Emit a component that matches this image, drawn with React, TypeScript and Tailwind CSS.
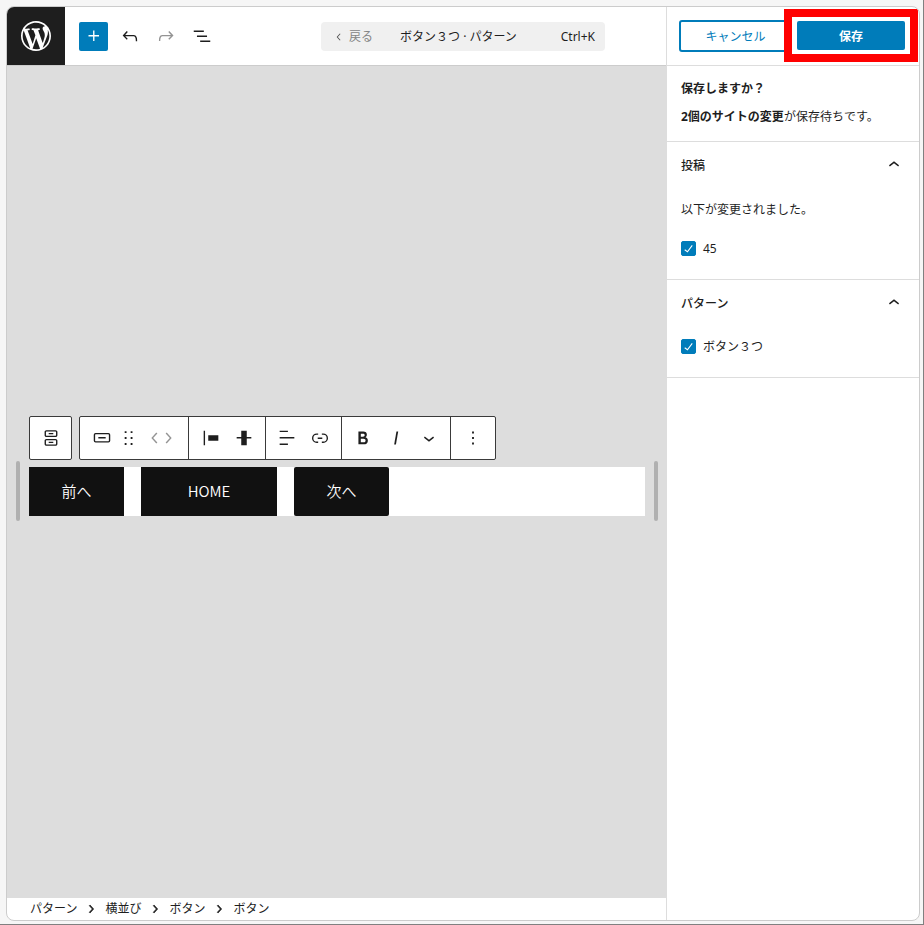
import { ReactNode, useState } from "react";

const paths = {
    plus: "M11 12.5V17.5H12.5V12.5H17.5V11H12.5V6H11V11H6V12.5H11Z",
    undo: "M18.3 11.7c-.6-.6-1.4-.9-2.3-.9H6.7l2.9-3.3-1.1-1-4.5 5L8.5 16l1-1-2.7-2.7H16c.5 0 .9.2 1.3.5 1 1 1 3.4 1 4.5v.3h1.5v-.2c0-1.5 0-4.3-1.5-5.7z",
    redo: "M15.6 6.5l-1.1 1 2.9 3.3H8c-.9 0-1.7.3-2.3.9-1.4 1.5-1.4 4.2-1.4 5.6v.2h1.5v-.3c0-1.1 0-3.5 1-4.5.3-.3.7-.5 1.3-.5h9.2L14.5 15l1.1 1.1 4.6-4.6-4.6-5z",
    listView: "M3 6h11v1.5H3V6Zm3.5 5.5h11V13h-11v-1.5ZM21 17H10v1.5h11V17Z",
    chevronUp: "M6.5 12.4L12 8l5.5 4.4-.9 1.2L12 10l-4.5 3.6-1-1.2z",
    chevronDown: "M17.5 11.6L12 16l-5.5-4.4.9-1.2L12 14l4.5-3.6 1 1.2z",
    chevronLeft: "M14.6 7l-1.2-1L8 12l5.4 6 1.2-1-4.6-5z",
    chevronRight: "M10.6 6L9.4 7l4.6 5-4.6 5 1.2 1 5.4-6z",
    check: "M16.7 7.1l-6.3 8.5-3.3-2.5-.9 1.2 4.5 3.4L17.9 8z",
    buttons:
        "M14.5 17.5H9.5V16H14.5V17.5Z M14.5 8H9.5V6.5H14.5V8Z M7 3.5H17C18.1 3.5 19 4.4 19 5.5V9C19 10.1 18.1 11 17 11H7C5.9 11 5 10.1 5 9V5.5C5 4.4 5.9 3.5 7 3.5ZM17 5H7C6.7 5 6.5 5.2 6.5 5.5V9C6.5 9.3 6.7 9.5 7 9.5H17C17.3 9.5 17.5 9.3 17.5 9V5.5C17.5 5.2 17.3 5 17 5Z M7 13H17C18.1 13 19 13.9 19 15V18.5C19 19.6 18.1 20.5 17 20.5H7C5.9 20.5 5 19.6 5 18.5V15C5 13.9 5.9 13 7 13ZM17 14.5H7C6.7 14.5 6.5 14.7 6.5 15V18.5C6.5 18.8 6.7 19 7 19H17C17.3 19 17.5 18.8 17.5 18.5V15C17.5 14.7 17.3 14.5 17 14.5Z",
    button: "M8 12.5h8V11H8v1.5Z M19 6.5H5a2 2 0 0 0-2 2V15a2 2 0 0 0 2 2h14a2 2 0 0 0 2-2V8.5a2 2 0 0 0-2-2ZM5 8h14a.5.5 0 0 1 .5.5V15a.5.5 0 0 1-.5.5H5a.5.5 0 0 1-.5-.5V8.5A.5.5 0 0 1 5 8Z",
    drag: "M7.3 6.5h2v-2h-2zm6.5 0h2v-2h-2zM7.3 13h2v-2h-2zm6.5 0h2v-2h-2zM7.3 19.5h2v-2h-2zm6.5 0h2v-2h-2z",
    justifyLeft: "M9 9v6h11V9H9zM4 20h1.5V4H4v16z",
    alignMiddle: "M20 11h-5V4H9v7H4v1.5h5V20h6v-7.5h5z",
    alignText: "M13 5.5H4V4h9v1.5Zm7 7H4V11h16v1.5Zm-7 7H4V18h9v1.5Z",
    link: "M10 17.389H8.444A5.194 5.194 0 1 1 8.444 7H10v1.5H8.444a3.694 3.694 0 0 0 0 7.389H10v1.5ZM14 7h1.556a5.194 5.194 0 0 1 0 10.39H14v-1.5h1.556a3.694 3.694 0 0 0 0-7.39H14V7Zm-4.5 6h5v-1.5h-5V13Z",
    bold: "M14.7 11.3c1-.6 1.5-1.6 1.5-3 0-2.3-1.3-3.4-4-3.4H7v14h5.8c1.4 0 2.5-.3 3.3-1 .8-.7 1.2-1.7 1.2-2.9.1-1.9-.8-3.1-2.6-3.7zm-5.1-4h2.3c.6 0 1.1.1 1.4.4.3.3.5.7.5 1.2s-.2 1-.5 1.2c-.3.3-.8.4-1.4.4H9.6V7.3zm4.6 9c-.4.3-1 .4-1.7.4H9.6v-3.9h2.9c.7 0 1.3.2 1.7.5.4.3.6.8.6 1.5s-.2 1.2-.6 1.5z",
    italic: "M12.5 5L10 19h1.9l2.5-14z",
    more: "M13 19h-2v-2h2v2zm0-6h-2v-2h2v2zm0-6h-2V5h2v2z",
    wordpress:
        "M20 10c0-5.51-4.49-10-10-10C4.48 0 0 4.49 0 10c0 5.52 4.48 10 10 10 5.51 0 10-4.48 10-10zM7.78 15.37L4.37 6.22c.55-.02 1.17-.08 1.17-.08.5-.06.44-1.13-.06-1.11 0 0-1.45.11-2.37.11-.18 0-.37 0-.58-.01C4.12 2.69 6.87 1.11 10 1.11c2.33 0 4.45.87 6.05 2.34-.68-.11-1.65.39-1.65 1.58 0 .74.45 1.36.9 2.1.35.61.55 1.36.55 2.46 0 1.49-1.4 5-1.4 5l-3.03-8.37c.54-.02.82-.17.82-.17.5-.05.44-1.25-.06-1.22 0 0-1.44.12-2.38.12-.87 0-2.33-.12-2.33-.12-.5-.03-.56 1.2-.06 1.22l.92.08 1.26 3.41zM17.41 10c.24-.64.74-1.87.43-4.25.7 1.29 1.05 2.71 1.05 4.25 0 3.29-1.73 6.24-4.4 7.78.97-2.59 1.94-5.2 2.92-7.78zM6.1 18.09C3.12 16.65 1.11 13.53 1.11 10c0-1.3.23-2.48.72-3.59C3.25 10.3 4.67 14.2 6.1 18.09zm4.03-6.63l2.58 6.98c-.86.29-1.76.45-2.71.45-.79 0-1.57-.11-2.29-.33.81-2.38 1.62-4.74 2.42-7.1z",
};

type IconName = keyof typeof paths;

const Icon = ({
    name,
    className = "size-[22px]",
    viewBox = "0 0 24 24",
}: {
    name: IconName;
    className?: string;
    viewBox?: string;
}) => (
    <svg
        viewBox={viewBox}
        className={`shrink-0 fill-current ${className}`}
        aria-hidden="true"
    >
        <path d={paths[name]} />
    </svg>
);

const ToolButton = ({
    icon,
    label,
    className,
}: {
    icon: IconName;
    label: string;
    className: string;
}) => (
    <button
        type="button"
        aria-label={label}
        className={`flex h-9 shrink-0 items-center justify-center ${className}`}
    >
        <Icon name={icon} />
    </button>
);

const Header = () => (
    <header className="flex h-[59px] items-center border-b border-[#ccc]">
        <a
            href="#dashboard"
            aria-label="WordPress"
            className="flex h-full w-[58px] shrink-0 items-center justify-center bg-[#1e1e1e] text-white"
        >
            <Icon
                name="wordpress"
                className="size-9"
                viewBox="-2 -2 24 24"
            />
        </a>
        <button
            type="button"
            aria-label="ブロック挿入"
            className="mr-1 ml-3.5 flex size-[29px] shrink-0 items-center justify-center rounded-[2px] bg-[#007cba] text-white"
        >
            <Icon name="plus" />
        </button>
        <ToolButton icon="undo" label="元に戻す" className="w-9" />
        <ToolButton icon="redo" label="やり直し" className="w-9 text-[#949494]" />
        <ToolButton icon="listView" label="リスト表示" className="w-9" />
        <div className="flex flex-1 justify-center pl-10">
            <div className="flex h-[29px] w-full max-w-[284px] items-center rounded bg-[#f0f0f0] pt-0.5 pr-2.5 pl-[11px]">
                <button
                    type="button"
                    className="flex items-center gap-[3px] text-[#858585]"
                >
                    <Icon
                        name="chevronLeft"
                        className="size-3.5 text-[#555]"
                    />
                    戻る
                </button>
                <button
                    type="button"
                    className="flex flex-1 items-center justify-between pl-[27px]"
                >
                    <span>ボタン３つ · パターン</span>
                    <kbd className="font-[inherit]">Ctrl+K</kbd>
                </button>
            </div>
        </div>
    </header>
);

const ToolbarGroup = ({ children }: { children: ReactNode }) => (
    <div className="flex items-center border-r border-[#3a3a3a] last:border-r-0">
        {children}
    </div>
);

const BlockToolbar = () => (
    <div
        role="toolbar"
        aria-label="ブロックツール"
        className="absolute bottom-full left-0 mb-[7px] flex gap-[7px] text-[#1e1e1e]"
    >
        <div className="flex h-11 items-center rounded-[2px] border border-[#3a3a3a] bg-white">
            <ToolButton
                icon="buttons"
                label="親ブロックを選択"
                className="w-[41px]"
            />
        </div>
        <div className="flex h-11 rounded-[2px] border border-[#3a3a3a] bg-white">
            <ToolbarGroup>
                <ToolButton
                    icon="button"
                    label="ボタン"
                    className="w-[38px] pl-1.5"
                />
                <ToolButton icon="drag" label="ドラッグ" className="w-[22px]" />
                <div className="mr-3.5 ml-2 flex text-[#949494]">
                    <ToolButton
                        icon="chevronLeft"
                        label="左に移動"
                        className="w-[13px]"
                    />
                    <ToolButton
                        icon="chevronRight"
                        label="右に移動"
                        className="w-[13px]"
                    />
                </div>
            </ToolbarGroup>
            <ToolbarGroup>
                <div className="flex px-[5px]">
                    <ToolButton
                        icon="justifyLeft"
                        label="項目の揃え位置"
                        className="w-[33px]"
                    />
                    <ToolButton
                        icon="alignMiddle"
                        label="垂直配置"
                        className="w-[33px]"
                    />
                </div>
            </ToolbarGroup>
            <ToolbarGroup>
                <div className="flex pr-[5px] pl-1">
                    <ToolButton
                        icon="alignText"
                        label="テキストの配置"
                        className="w-[33px]"
                    />
                    <ToolButton
                        icon="link"
                        label="リンク"
                        className="w-[33px]"
                    />
                </div>
            </ToolbarGroup>
            <ToolbarGroup>
                <div className="flex pr-[5px] pl-1">
                    <ToolButton
                        icon="bold"
                        label="太字"
                        className="w-[33px]"
                    />
                    <ToolButton
                        icon="italic"
                        label="イタリック"
                        className="w-[33px]"
                    />
                    <ToolButton
                        icon="chevronDown"
                        label="さらに表示"
                        className="w-[33px]"
                    />
                </div>
            </ToolbarGroup>
            <ToolbarGroup>
                <ToolButton
                    icon="more"
                    label="オプション"
                    className="w-11"
                />
            </ToolbarGroup>
        </div>
    </div>
);

const ResizeHandle = ({ label }: { label: string }) => (
    <button
        type="button"
        aria-label={label}
        className="h-[60px] w-1 shrink-0 cursor-ew-resize rounded-full bg-[#b0b0b0]"
    />
);

const Canvas = () => (
    <main className="flex flex-1 items-center gap-[9px] bg-[#ddd] pt-[18px] pr-2 pl-[9px]">
        <ResizeHandle label="左にドラッグしてサイズ変更" />
        <div className="relative flex h-[49px] flex-1 gap-[17px] bg-white font-['Noto_Sans_CJK_JP',sans-serif] text-[15px] font-[350] text-white">
            <BlockToolbar />
            <button type="button" className="w-[95px] bg-[#111]">
                前へ
            </button>
            <button type="button" className="w-[136px] bg-[#111]">
                HOME
            </button>
            <button type="button" className="w-[95px] rounded-[2px] bg-[#111]">
                次へ
            </button>
        </div>
        <ResizeHandle label="右にドラッグしてサイズ変更" />
    </main>
);

const crumbs = ["パターン", "横並び", "ボタン", "ボタン"];

const Footer = () => (
    <nav aria-label="ブロックパンくずリスト" className="h-[22px] pl-[23px]">
        <ol className="flex h-full items-center gap-1.5">
            {crumbs.map((crumb, i) => (
                <li key={i} className="flex items-center gap-1.5">
                    {i > 0 && (
                        <Icon
                            name="chevronRight"
                            className="size-4 stroke-current"
                        />
                    )}
                    <button type="button">{crumb}</button>
                </li>
            ))}
        </ol>
    </nav>
);

const EntityCheckbox = ({ label }: { label: string }) => {
    const [checked, setChecked] = useState(true);
    return (
        <label className="flex items-center gap-[7px]">
            <span className="relative mb-0.5 flex size-[15px]">
                <input
                    type="checkbox"
                    checked={checked}
                    onChange={e => setChecked(e.target.checked)}
                    className="size-[15px] appearance-none rounded-[2px] border border-[#1e1e1e] checked:border-[#007cba] checked:bg-[#007cba]"
                />
                {checked && (
                    <span className="pointer-events-none absolute inset-0 flex items-center justify-center text-white">
                        <Icon name="check" className="size-[17px]" />
                    </span>
                )}
            </span>
            {label}
        </label>
    );
};

const Panel = ({ title, children }: { title: string; children: ReactNode }) => {
    const [open, setOpen] = useState(true);
    return (
        <section className="border-b border-[#ddd] px-3.5">
            <h2 className="font-medium">
                <button
                    type="button"
                    aria-expanded={open}
                    onClick={() => setOpen(!open)}
                    className="flex h-12 w-full items-center justify-between"
                >
                    {title}
                    <Icon
                        name={open ? "chevronUp" : "chevronDown"}
                        className="mb-0.5 size-[22px]"
                    />
                </button>
            </h2>
            {open && children}
        </section>
    );
};

const SavePanel = () => (
    <aside className="flex w-[253px] shrink-0 flex-col border-l border-[#ddd]">
        <div className="flex h-[59px] items-center gap-[9px] border-b border-[#ddd] pr-3.5 pb-px pl-3">
            <button
                type="button"
                className="h-8 flex-1 rounded-[3px] border-2 border-[#007cba] pt-0.5 pl-1 text-[#007cba]"
            >
                キャンセル
            </button>
            <div className="relative flex w-[108px] shrink-0">
                <span className="absolute -inset-x-[13px] -inset-y-3 border-8 border-[#f00] bg-white" />
                <button
                    type="button"
                    className="relative h-[29px] w-full rounded-[2px] bg-[#007cba] pt-0.5 font-bold text-white"
                >
                    保存
                </button>
            </div>
        </div>
        <div className="flex flex-col gap-2 border-b border-[#ddd] px-3.5 pt-[13px] pb-3.5">
            <strong>保存しますか？</strong>
            <p>
                <strong>2個のサイトの変更</strong>が保存待ちです。
            </p>
        </div>
        <Panel title="投稿">
            <div className="flex flex-col gap-[19px] pt-2.5 pb-5">
                <p>以下が変更されました。</p>
                <EntityCheckbox label="45" />
            </div>
        </Panel>
        <Panel title="パターン">
            <div className="pt-[9px] pb-5">
                <EntityCheckbox label="ボタン３つ" />
            </div>
        </Panel>
    </aside>
);

export default function App() {
    return (
        <div className="flex min-h-screen border-r border-b border-[#808080] bg-[#f6f6f6] pt-1.5 pr-[3px] pb-[3px] pl-1.5 font-['Noto_Sans','Noto_Sans_CJK_JP',sans-serif] text-xs leading-5 text-[#1e1e1e]">
            <div className="flex flex-1 overflow-hidden rounded-lg border border-[#ccc] bg-white">
                <div className="flex min-w-0 flex-1 flex-col">
                    <Header />
                    <Canvas />
                    <Footer />
                </div>
                <SavePanel />
            </div>
        </div>
    );
}
